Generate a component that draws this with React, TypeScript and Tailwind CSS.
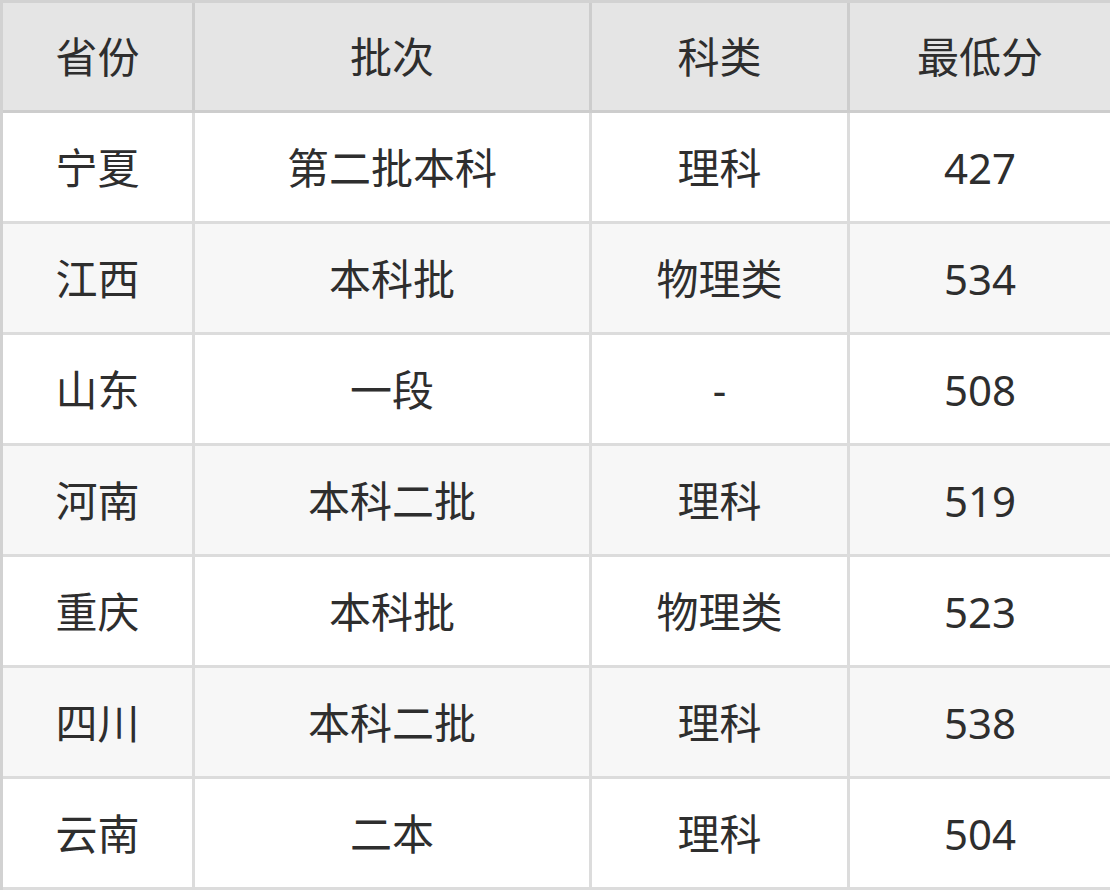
import React from "react";

const rows: [string, string, string, string][] = [
  ["宁夏", "第二批本科", "理科", "427"],
  ["江西", "本科批", "物理类", "534"],
  ["山东", "一段", "-", "508"],
  ["河南", "本科二批", "理科", "519"],
  ["重庆", "本科批", "物理类", "523"],
  ["四川", "本科二批", "理科", "538"],
  ["云南", "二本", "理科", "504"],
];

export default function App() {
  return (
    <div
      className="w-[1110px] h-[891px] bg-white text-[#2e2e2e]"
      style={{ fontFamily: '"Noto Sans", "Noto Sans CJK SC", sans-serif' }}
    >
      <div className="grid grid-cols-[192px_397px_258px_263px] border-l-[3px] border-t-[3px] border-[#d2d2d2]">
        {["省份", "批次", "科类", "最低分"].map((h) => (
          <div
            key={h}
            className="h-[110px] flex items-center justify-center bg-[#e5e5e5] border-r-[3px] border-b-[3px] border-[#cdcdcd] text-[42px]"
          >
            {h}
          </div>
        ))}
        {rows.map((r, i) =>
          r.map((c, j) => (
            <div
              key={i + "-" + j}
              className={
                "h-[111px] flex items-center justify-center border-r-[3px] border-b-[3px] border-[#dcdcdc] text-[42px] " +
                (i % 2 === 1 ? "bg-[#f7f7f7]" : "bg-white")
              }
            >
              {c}
            </div>
          ))
        )}
      </div>
    </div>
  );
}
